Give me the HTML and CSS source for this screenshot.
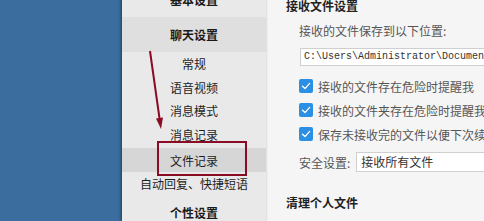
FILE: index.html
```html
<!DOCTYPE html>
<html lang="zh-CN">
<head>
<meta charset="utf-8">
<title>设置</title>
<link rel="stylesheet" href="styles.css">
</head>
<body>
<div class="app">
  <div class="desktop"></div>
  <nav class="sidebar">
    <div class="group">基本设置</div>
    <div class="group open">聊天设置</div>
    <div class="item h23">常规</div>
    <div class="item">语音视频</div>
    <div class="item h23">消息模式</div>
    <div class="item">消息记录</div>
    <div class="item selected">文件记录</div>
    <div class="item h23">自动回复、快捷短语</div>
    <div class="group">个性设置</div>
  </nav>
  <main class="panel">
    <h2 class="heading">接收文件设置</h2>
    <div class="section">
      <div class="label">接收的文件保存到以下位置:</div>
      <div class="path-input">C:\Users\Administrator\Documents\Tencent Files</div>
      <div class="check-row"><span class="checkbox"><svg viewBox="0 0 14 14" width="14" height="14"><path d="M3.5 7.2 L6 9.6 L10.6 4.4" fill="none" stroke="#fff" stroke-width="1.4" stroke-linecap="round" stroke-linejoin="round"/></svg></span>接收的文件存在危险时提醒我</div>
      <div class="check-row"><span class="checkbox"><svg viewBox="0 0 14 14" width="14" height="14"><path d="M3.5 7.2 L6 9.6 L10.6 4.4" fill="none" stroke="#fff" stroke-width="1.4" stroke-linecap="round" stroke-linejoin="round"/></svg></span>接收的文件夹存在危险时提醒我</div>
      <div class="check-row"><span class="checkbox"><svg viewBox="0 0 14 14" width="14" height="14"><path d="M3.5 7.2 L6 9.6 L10.6 4.4" fill="none" stroke="#fff" stroke-width="1.4" stroke-linecap="round" stroke-linejoin="round"/></svg></span>保存未接收完的文件以便下次续传</div>
      <div class="security-row">
        <span class="label-inline">安全设置:</span>
        <div class="select">接收所有文件</div>
      </div>
    </div>
    <h2 class="heading heading-2">清理个人文件</h2>
  </main>
  <svg class="annotation" width="484" height="221" viewBox="0 0 484 221">
    <line x1="150" y1="51" x2="159.6" y2="119" stroke="#8a0c24" stroke-width="2"/>
    <polygon points="161,129 156,118.4 163,117.6" fill="#8a0c24"/>
  </svg>
  <div class="highlight-box"></div>
</div>
</body>
</html>
```
FILE: styles.css
```css
html, body {
  margin: 0;
  padding: 0;
}
body {
  width: 484px;
  height: 221px;
  overflow: hidden;
  font-family: "Noto Sans CJK SC", "Microsoft YaHei", sans-serif;
  font-size: 12px;
  color: #222;
  background: #f5f5f5;
}
.app {
  position: relative;
  display: flex;
  height: 221px;
  overflow: hidden;
}
.desktop {
  flex: none;
  width: 122px;
  background: #3b6e9f;
}
.sidebar {
  position: relative;
  z-index: 1;
  flex: none;
  width: 144px;
  margin-top: -18px;
  background: #e9e9e9;
  box-shadow: -1px 0 3px rgba(0, 0, 0, 0.45);
  display: flex;
  flex-direction: column;
}
.group {
  flex: none;
  height: 35px;
  display: flex;
  align-items: center;
  justify-content: center;
  font-weight: bold;
  color: #1a1a1a;
}
.group.open {
  background: #dfdfdf;
}
.item {
  flex: none;
  height: 24px;
  display: flex;
  align-items: center;
  justify-content: center;
  color: #1e1e1e;
}
.item.h23 {
  height: 23px;
}
.item.selected {
  margin-top: 2px;
  background: #d6d6d6;
}
.panel {
  flex: 1;
  min-width: 0;
  background: #f5f5f5;
  padding-left: 20px;
  white-space: nowrap;
  overflow: hidden;
}
.heading {
  margin: -4px 0 0 0;
  height: 20px;
  line-height: 20px;
  font-size: 12px;
  font-weight: bold;
  color: #222;
}
.heading-2 {
  margin-top: 21px;
}
.section {
  padding-left: 13px;
}
.label {
  margin-top: 5px;
  height: 20px;
  line-height: 20px;
  color: #555;
}
.path-input {
  margin: 7px 0 0 1px;
  height: 18px;
  box-sizing: border-box;
  border: 1px solid #cfcfcf;
  border-right: none;
  background: #fff;
  padding-left: 3px;
  font-family: "Liberation Mono", monospace;
  font-size: 10px;
  line-height: 16px;
  color: #333;
}
.check-row {
  height: 24px;
  display: flex;
  align-items: center;
  color: #555;
}
.path-input + .check-row {
  margin-top: 8px;
}
.checkbox {
  flex: none;
  width: 14px;
  height: 14px;
  margin-right: 5px;
  border-radius: 2px;
  background: #2b8fe3;
  display: flex;
}
.security-row {
  margin-top: 6px;
  height: 20px;
  display: flex;
  align-items: center;
}
.label-inline {
  color: #555;
  margin-right: 6px;
}
.select {
  flex: 1;
  height: 20px;
  box-sizing: border-box;
  border: 1px solid #cfcfcf;
  border-right: none;
  background: #fff;
  padding-left: 4px;
  line-height: 18px;
  color: #333;
}
.annotation {
  position: absolute;
  left: 0;
  top: 0;
  z-index: 2;
  pointer-events: none;
}
.highlight-box {
  position: absolute;
  z-index: 2;
  left: 157px;
  top: 141px;
  width: 90px;
  height: 35px;
  box-sizing: border-box;
  border: 2px solid #8a0c24;
}
```
